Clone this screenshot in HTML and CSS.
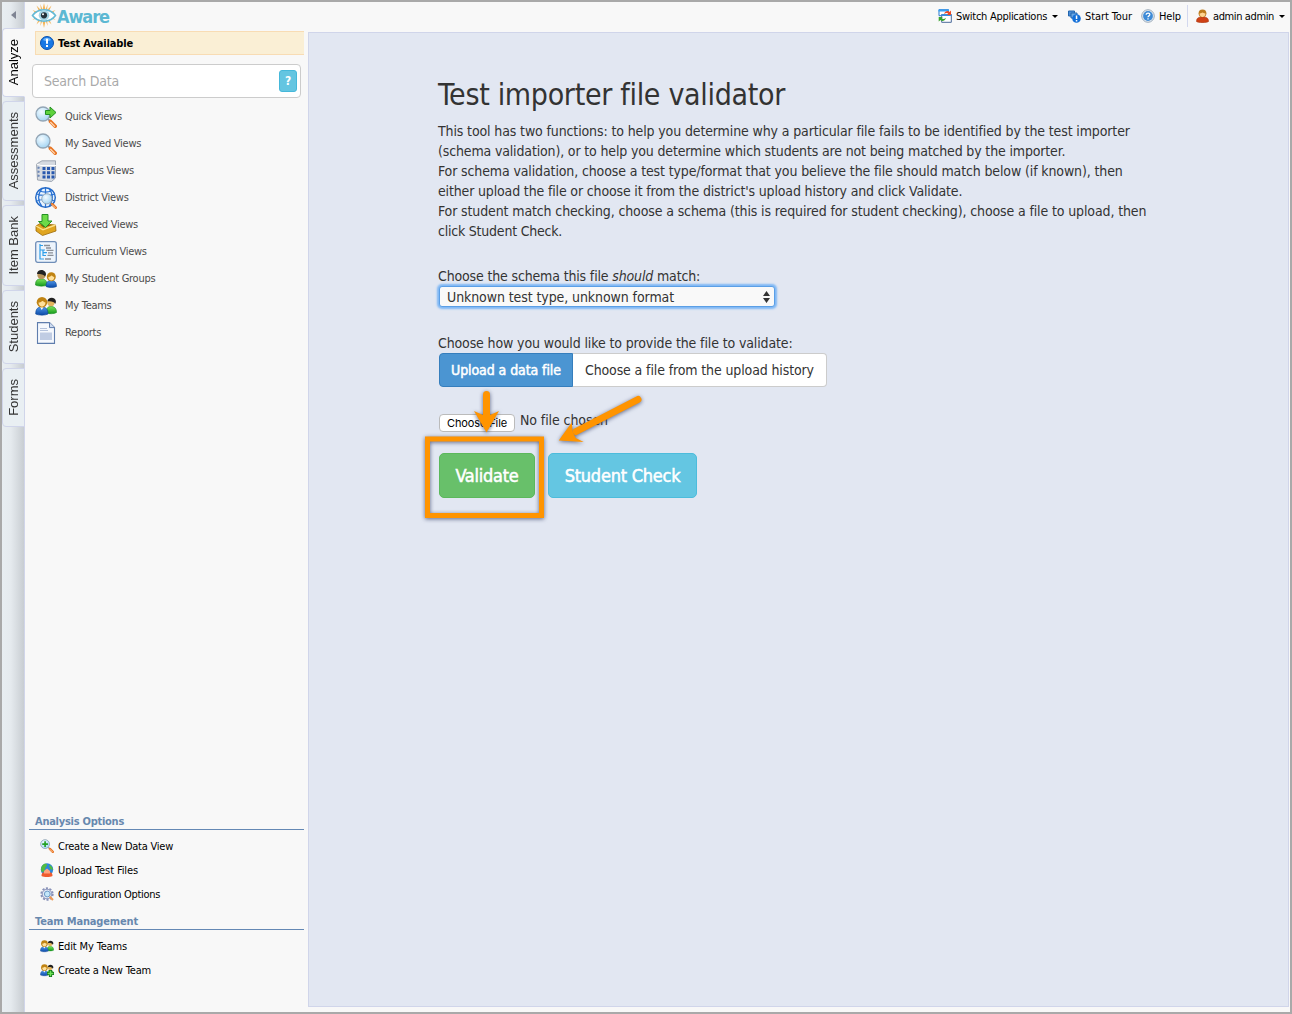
FILE: index.html
```html
<!DOCTYPE html>
<html lang="en">
<head>
<meta charset="utf-8">
<title>Aware</title>
<link rel="stylesheet" href="styles.css">
</head>
<body>
<svg class="defs" width="0" height="0" aria-hidden="true">
  <defs>
    <linearGradient id="blue" x1="0" y1="0" x2="0" y2="1"><stop offset="0" stop-color="#4f97e8"/><stop offset="1" stop-color="#0b4aa8"/></linearGradient>
    <linearGradient id="green" x1="0" y1="0" x2="0" y2="1"><stop offset="0" stop-color="#7be45a"/><stop offset="1" stop-color="#159a1c"/></linearGradient>
    <radialGradient id="lens" cx=".4" cy=".35" r=".7"><stop offset="0" stop-color="#f4fbff"/><stop offset="1" stop-color="#9fd2f2"/></radialGradient>
    <symbol id="magnifier" viewBox="0 0 22 22">
      <path d="M13 13l2.500 2.500" stroke="#8b97a3" stroke-width="2"/>
      <path d="M15.500 15.500l4.700 4.700" stroke="#e87524" stroke-width="3.600" stroke-linecap="round"/>
      <path d="M15.300 16l4.600 4.600" stroke="#ffd9b5" stroke-width="1.300"/>
      <circle cx="8" cy="8" r="7" fill="url(#lens)" stroke="#93a5b5" stroke-width="1.300"/>
    </symbol>
    <symbol id="team" viewBox="0 0 22 22">
      <path d="M11 18c0-5 2-6.500 5-6.500s5.500 1.500 5.500 6c-2 1.500-8 1.500-10.500.5z" fill="url(#green)" stroke="#168a1c" stroke-width=".6"/>
      <circle cx="16" cy="7.500" r="3.700" fill="#e2b45c"/>
      <path d="M12.500 6.500c0-5 8.500-5 8.500.5l-.8 2c-.7-2-4-3-7.700-2.500z" fill="#222"/>
      <path d="M.7 19c0-5.500 2.300-7 6-7s6.300 1.500 6.300 7c-2.500 1.500-9.500 1.500-12.300 0z" fill="url(#blue)" stroke="#0c4596" stroke-width=".6"/>
      <path d="M5 12l1.800 3L8.600 12z" fill="#fff"/>
      <circle cx="7" cy="7.200" r="5.300" fill="#c08312"/>
      <path d="M3.500 7.500c3 0 3-1.500 4-1.500s1.500 1.500 3 1.500c0 5.500-7 5.500-7 0z" fill="#ffe09b"/>
    </symbol>
  </defs>
</svg>
<div class="app">
  <nav class="rail">
    <div class="collapse"><svg width="5" height="8" viewBox="0 0 5 8"><path d="M5 0v8L0 4z" fill="#7f8493"/></svg></div>
    <a class="tab tab-analyze active"><span>Analyze</span></a>
    <a class="tab tab-assessments"><span>Assessments</span></a>
    <a class="tab tab-items"><span>Item Bank</span></a>
    <a class="tab tab-students"><span>Students</span></a>
    <a class="tab tab-forms"><span>Forms</span></a>
  </nav>
  <div class="body">
    <header class="topbar">
      <div class="logo">
        <svg width="26" height="25" viewBox="0 0 26 25">
          <path d="M13 0l1.300 6h-2.600zM13 25l1.300-6h-2.600zM5.500 2.500l4.600 4.700-2 1.300zM20.500 2.500l-4.600 4.700 2 1.300zM5.500 21.500l4.600-4.700-2-1.300zM20.500 21.500l-4.600-4.700 2-1.300zM1.500 7l5 2-1.200 1.500zM24.500 7l-5 2 1.200 1.500zM1.500 17l5-2-1.200-1.500zM24.500 17l-5-2 1.200-1.500zM9.300 1l2 5-1.400.5zM16.700 1l-2 5 1.400.5zM9.300 23l2-5-1.400-.5zM16.700 23l-2-5 1.400-.5z" fill="#f3b457"/>
          <path d="M1.500 12.500C7 5 19 5 24.500 12.500 19 20 7 20 1.500 12.500z" fill="#fff" stroke="#65b9d4" stroke-width="1.600"/>
          <circle cx="13" cy="12.300" r="5.300" fill="#a5d6e6"/><circle cx="13" cy="12.300" r="3.100" fill="#26323a"/><circle cx="12" cy="11.200" r="1" fill="#fff"/>
        </svg>
        <span>Aware</span>
      </div>
      <div class="tools">
        <a class="tool tool-apps"><svg width="14" height="14" viewBox="0 0 14 14"><path d="M1 .700h9.500v6H1z" fill="#fff" stroke="#2878cf"/><path d="M.5.500h10.500v2H.5z" fill="#39a3f4"/><path d="M3.700 5.500h9.600v7.800H3.700z" fill="#fff" stroke="#4a6a9a"/><path d="M3.500 5h10v2h-10z" fill="#3d8fdd"/><path d="M6 5c1-3 4-4 5.500-2L13 1.500V6H9l1.300-1.300C9 3.700 8 4 6 5z" fill="#ec4b25"/><path d="M8 9c-1 3-4 4-5.500 2L.700 12.500V8h4L3.500 9.300C5 10.300 6 10 8 9z" fill="#38a42d"/></svg><span>Switch Applications</span><i class="caret"></i></a>
        <a class="tool tool-tour"><svg width="13" height="13" viewBox="0 0 13 13"><path d="M.5 1h6v5h-6z" fill="#4a8ed8" stroke="#2466ae"/><path d="M3 3h6v5H3z" fill="#6ba8e4" stroke="#2466ae"/><circle cx="8.500" cy="8.500" r="4.300" fill="#1470d8"/><path d="M7.800 5.500h1.500v3.500H7.800zM7.800 10h1.500v1.400H7.800z" fill="#fff"/></svg><span>Start Tour</span></a>
        <a class="tool tool-help"><svg width="14" height="14" viewBox="0 0 14 14"><circle cx="7" cy="7" r="6.300" fill="#e3ebf3" stroke="#9dabb9"/><circle cx="7" cy="7" r="4.900" fill="#3d8ad6"/><path d="M5.200 5.700C5.200 3.500 9 3.600 8.800 5.700 8.700 6.900 7 6.900 7 8.200M7 9.300v1.200" fill="none" stroke="#fff" stroke-width="1.300"/></svg><span>Help</span></a>
        <a class="tool tool-user"><svg width="13" height="14" viewBox="0 0 13 14"><path d="M.5 12.500C.5 9 2.500 8 6.500 8s6 1 6 4.500c-2 1.500-10 1.500-12 0z" fill="#cf4115" stroke="#a83108" stroke-width=".6"/><circle cx="6.500" cy="4.300" r="3.900" fill="#bd7b1c"/><path d="M3.500 4.500c2 0 2-1 3-1s1 1 3 1c0 4.500-6 4.500-6 0z" fill="#ffd591"/></svg><span>admin admin</span><i class="caret"></i></a>
      </div>
    </header>
    <div class="columns">
      <aside class="sidebar">
        <div class="notice"><svg width="14" height="14" viewBox="0 0 14 14"><circle cx="7" cy="7" r="6.500" fill="#1878e4" stroke="#0b52b0"/><path d="M3 4c1.500-3 6.500-3 8 0-2 1.500-6 1.500-8 0z" fill="#6fb6fa"/><path d="M6 2.800h2v5H6zM6 9h2v2H6z" fill="#fff"/></svg><span>Test Available</span></div>
        <div class="search"><span>Search Data</span><b class="hint">?</b></div>
        <ul class="views">
          <li><svg width="22" height="22" viewBox="0 0 22 22"><use href="#magnifier"/><path d="M10.500 4.500h4.500V1l6 5.500-6 5.500V8.500h-4.500z" fill="#5fd23d" stroke="#239022"/></svg><span>Quick Views</span></li>
          <li><svg width="22" height="22"><use href="#magnifier"/></svg><span>My Saved Views</span></li>
          <li><svg width="22" height="22" viewBox="0 0 22 22"><path d="M1.500 4L7 .800h13.500L20.500 18l-4 3.500-14-1.500z" fill="#d5dae1" stroke="#8c96a3" stroke-width=".8"/><path d="M1.500 4L6 5.500h15" fill="none" stroke="#fff"/><path d="M7.500 7h3v3h-3zM12 7h3v3h-3zM16.500 7h3v3h-3zM7.500 11.300h3v3h-3zM12 11.300h3v3h-3zM16.500 11.300h3v3h-3zM7.500 15.600h3v3h-3zM12 15.600h3v3h-3zM16.500 15.600h3v3h-3z" fill="#2858ae"/><path d="M2.500 7.500l2 .5M2.500 11.500l2 .5M2.500 15.500l2 .5" stroke="#6c87b6" stroke-width="2"/></svg><span>Campus Views</span></li>
          <li><svg width="22" height="22" viewBox="0 0 22 22"><circle cx="10.500" cy="10.500" r="9.800" fill="#e9f4ff" stroke="#2066c4" stroke-width="1.400"/><path d="M1.500 7C7 9 15 9 20 7M1.500 14c5-2 14-2 18.500 0M10.500 1v19M7 1.500C2.500 7 2.500 14 7 19.500M14 1.500c4.500 5.500 4.500 12.500 0 18M4 3.500c4 2 9 2 13 0" fill="none" stroke="#2b74d4" stroke-width="1.200"/><svg x="6" y="6" width="16" height="16"><use href="#magnifier"/></svg></svg><span>District Views</span></li>
          <li><svg width="22" height="22" viewBox="0 0 22 22"><path d="M1 12l4-2.500 15.500 1.500.5 6-13.500 4.500L1 17z" fill="#e0a51f" stroke="#9c6a0a" stroke-width=".8"/><path d="M1 12l7 3.800L20.500 11" fill="none" stroke="#fbe08a" stroke-width="1.400"/><path d="M5 10.500l3.500 3L17 11z" fill="#81530b"/><path d="M7 .500h6v6.500h4L10.500 13.500 3.500 7.500H7z" fill="#6cdb48" stroke="#249025"/></svg><span>Received Views</span></li>
          <li><svg width="22" height="22" viewBox="0 0 22 22"><rect x=".7" y=".7" width="20.600" height="20.600" rx="2" fill="#edf4fc" stroke="#6f8eb8" stroke-width="1.300"/><path d="M5 3v15h4M5 4.500h3M5 9h5M8 9v5.500h3M8 11.700h4" fill="none" stroke="#2f9ee8" stroke-width="1.200"/><path d="M9 4.500h6M11 7h5M11.500 9.300h7M13 11.800h5M12.500 14.300h6M10 18h6" stroke="#8a8f96" stroke-width="1.300"/></svg><span>Curriculum Views</span></li>
          <li><svg width="22" height="22" viewBox="0 0 22 22"><path d="M.5 17c0-5 2-6 5.500-6s6 1 6 6c-2 1.500-9 1.500-11.500 0z" fill="url(#green)" stroke="#168a1c" stroke-width=".6"/><circle cx="6.500" cy="7" r="4.200" fill="#b9955a"/><path d="M2 6c0-5.500 9-5.500 9 .500l-1 2c-1-2-4-2.500-8-2.500z" fill="#222"/><path d="M11 18.500c0-4.500 2-6 5.200-6s5.300 1.500 5.300 6c-2.500 1.300-8 1.300-10.500 0z" fill="url(#blue)" stroke="#0c4596" stroke-width=".6"/><circle cx="16.300" cy="8.800" r="4.500" fill="#c08312"/><path d="M13.300 9c2.500 0 2.500-1.500 3.300-1.500s1 1.500 2.700 1.500c0 4.800-6 4.800-6 0z" fill="#ffe09b"/></svg><span>My Student Groups</span></li>
          <li><svg width="22" height="22"><use href="#team"/></svg><span>My Teams</span></li>
          <li><svg width="22" height="22" viewBox="0 0 22 22"><path d="M2.500.600h12l5 5v15.800h-17z" fill="#f5f8fd" stroke="#5f7dad" stroke-width="1.100"/><path d="M14.500.600v5h5" fill="#cfdcf0" stroke="#5f7dad"/><path d="M5 8.500h8M5 6.500h7" stroke="#b4c2dc"/><path d="M5 10.500h12v7.500H5z" fill="#c0cce3"/></svg><span>Reports</span></li>
        </ul>
        <section class="options">
          <h2>Analysis Options</h2>
          <ul>
            <li class="opt-view"><svg width="14" height="14" viewBox="0 0 22 22"><use href="#magnifier"/><path d="M8 3.500v9M3.500 8h9" stroke="#22a022" stroke-width="2.600"/></svg><span>Create a New Data View</span></li>
            <li class="opt-upload"><svg width="14" height="14" viewBox="0 0 14 14"><circle cx="7" cy="6.500" r="6.200" fill="#2e86d8"/><path d="M2 3c2-3 5-2.500 5-1s-2 2-2 4-1 3-3 3c-1.500-2-1-4.500 0-6zM9 2c2 0 4 3 4 5l-3-1z" fill="#51bc3f"/><path d="M1.500 13c0-3 1-3.500 3-4L7 6l2.500 3c2 .5 3 1 3 4-2.500 1.300-8.500 1.300-11 0z" fill="#ef5b2e"/><path d="M4 8L7 5.500 10 8v2.500H4z" fill="#ffa27c"/></svg><span>Upload Test Files</span></li>
            <li class="opt-config"><svg width="14" height="14" viewBox="0 0 14 14"><circle cx="7" cy="7" r="5.700" fill="none" stroke="#8891b8" stroke-width="1.900" stroke-dasharray="2.100 1.480"/><circle cx="7" cy="7" r="4.800" fill="#e1e6f4" stroke="#8d96bc"/><circle cx="7.300" cy="7" r="2.900" fill="#c3e6fa" stroke="#6e9ac6"/><path d="M9.700 9.700l3.300 3.300" stroke="#f09a55" stroke-width="2"/></svg><span>Configuration Options</span></li>
          </ul>
          <h2 class="management">Team Management</h2>
          <ul>
            <li class="opt-edit"><svg width="14" height="14"><use href="#team"/></svg><span>Edit My Teams</span></li>
            <li class="opt-new"><svg width="14" height="14" viewBox="0 0 22 22"><use href="#team"/><path d="M16.500 11v11M11 16.500h11" stroke="#11731a" stroke-width="5"/><path d="M16.500 12v9M12 16.500h9" stroke="#6fe257" stroke-width="2.400"/></svg><span>Create a New Team</span></li>
          </ul>
        </section>
      </aside>
      <main class="panel">
        <h1>Test importer file validator</h1>
        <div class="intro">
          <p class="tight-1">This tool has two functions: to help you determine why a particular file fails to be identified by the test importer</p>
          <p class="tight-2">(schema validation), or to help you determine which students are not being matched by the importer.</p>
          <p class="tight-1">For schema validation, choose a test type/format that you believe the file should match below (if known), then</p>
          <p class="tight-2">either upload the file or choose it from the district's upload history and click Validate.</p>
          <p class="tight-1">For student match checking, choose a schema (this is required for student checking), choose a file to upload, then</p>
          <p class="tight-3">click Student Check.</p>
        </div>
        <div class="label tight-2">Choose the schema this file <em>should</em> match:</div>
        <div class="select"><span>Unknown test type, unknown format</span><svg width="7" height="12" viewBox="0 0 7 12"><path d="M3.500 0L7 5H0zM3.500 12L0 7h7z" fill="#333"/></svg></div>
        <div class="label second tight-1">Choose how you would like to provide the file to validate:</div>
        <div class="switch"><a class="on">Upload a data file</a><a class="tight-1">Choose a file from the upload history</a></div>
        <div class="file"><button class="choose">Choose File</button><span>No file chosen</span></div>
        <div class="actions"><button class="btn validate">Validate</button><button class="btn check">Student Check</button></div>
      </main>
    </div>
  </div>
  <svg class="callouts" width="240" height="150" viewBox="0 0 240 150">
    <rect x="12.500" y="54" width="114" height="76.500" fill="none" stroke="#ff9400" stroke-width="5"/>
    <path d="M71.500 9.500v22" stroke="#ff9400" stroke-width="7" stroke-linecap="round"/>
    <path d="M59 26l9 4h7l9-4-12.500 21.500z" fill="#ff9400"/>
    <path d="M223 14.500l-62 32" stroke="#ff9400" stroke-width="7" stroke-linecap="round"/>
    <path d="M143.700 55.500l13-18 1 9.500 3 6 8 4z" fill="#ff9400"/>
  </svg>
</div>
</body>
</html>
```
FILE: styles.css
```css
* { box-sizing: border-box; }
body { margin: 0; font-family: "DejaVu Sans Condensed", "DejaVu Sans", sans-serif; font-stretch: condensed; font-size: 11px; color: #000; }
ul { list-style: none; margin: 0; padding: 0; }
svg { display: block; flex: none; }
span, p, a { white-space: nowrap; }
.defs { position: absolute; }
.app { position: relative; display: flex; width: 1292px; height: 1014px; border: 2px solid #a9a9a9; background: #f8f8f8; overflow: hidden; }
.tight-1 { letter-spacing: -.126px; }
.tight-2 { letter-spacing: -.152px; }
.tight-3 { letter-spacing: -.22px; }

.rail { width: 23px; flex: none; display: flex; flex-direction: column; gap: 4px; border-right: 1px solid #d0d5ea; background: linear-gradient(90deg, #e8eef2, #e5eaee 40%, #c8cdd2); }
.collapse { height: 22px; display: flex; align-items: center; padding: 4px 0 0 9px; }
.tab { width: 23px; display: flex; align-items: center; justify-content: center; border: 1px solid #d0d5ea; border-radius: 4px 0 0 4px; background: #e9eff3; color: #333; font-family: "Liberation Sans", Arial, sans-serif; font-size: 13px; }
.tab span { writing-mode: vertical-rl; transform: rotate(180deg); line-height: 15px; }
.tab.active { background: #f8f8f8; border-right-color: #f8f8f8; color: #000; }
.tab-analyze { height: 69px; }
.tab-assessments { height: 100px; }
.tab-items { height: 81px; }
.tab-students { height: 74px; }
.tab-forms { height: 59px; }

.body { flex: 1; min-width: 0; display: flex; flex-direction: column; }
.topbar { height: 30px; display: flex; justify-content: space-between; }
.logo { display: flex; padding: 1px 0 0 6px; color: #5cb8d3; font-weight: bold; font-size: 18px; line-height: 28px; letter-spacing: -1.08px; }
.tools { display: flex; align-items: center; height: 28px; }
.tool { display: flex; align-items: center; height: 22px; }
.tool svg { margin-right: 4px; }
.caret { width: 0; height: 0; margin-left: 5px; border: 3px solid transparent; border-top-color: #000; border-bottom: 0; }
.tool-apps { margin-right: 10px; letter-spacing: -.28px; }
.tool-tour { margin-right: 9px; letter-spacing: -.09px; }
.tool-help { margin-right: 6px; letter-spacing: -.145px; }
.tool-user { border-left: 1px solid #d3d8ee; padding: 0 5px 0 8px; letter-spacing: -.38px; }

.columns { flex: 1; display: flex; min-height: 0; }
.sidebar { width: 283px; flex: none; display: flex; flex-direction: column; padding: 0 4px 30px; }
.notice { display: flex; align-items: center; gap: 4px; height: 24px; margin: -1px 0 0 6px; padding-left: 4px; background: #faefd5; border: 1px solid #f8dcb4; border-right: 0; font-weight: bold; letter-spacing: -.15px; }
.search { display: flex; align-items: center; justify-content: space-between; height: 34px; margin: 9px 3px 5px; padding: 0 3px 0 11px; background: #fff; border: 1px solid #ccc; border-radius: 4px; font-size: 14px; color: #aaa; letter-spacing: -.21px; }
.hint { width: 18px; height: 22px; border: 1px solid #46b8da; border-radius: 3px; background: #64c5e1; color: #fff; font-size: 12px; line-height: 20px; text-align: center; }
.views { color: #4c4c4c; padding-left: 6px; letter-spacing: -.27px; }
.views li { display: flex; gap: 8px; height: 27px; padding-top: 3px; line-height: 22px; }
.options { margin-top: auto; }
.options h2 { margin: 0; height: 17px; padding-left: 6px; border-bottom: 1px solid #6488b4; color: #6888ae; font-size: 11px; line-height: 18px; letter-spacing: -.26px; }
.options .management { letter-spacing: -.15px; }
.options ul { padding: 4px 0 0 11px; height: 83px; }
.options ul:last-child { height: 52px; }
.options li { display: flex; align-items: center; gap: 4px; height: 24px; }
.opt-view { letter-spacing: -.235px; }
.opt-upload { letter-spacing: -.11px; }
.opt-config { letter-spacing: -.307px; }
.opt-edit { letter-spacing: -.15px; }
.opt-new { letter-spacing: -.17px; }

.panel { flex: 1; margin: 0 1px 5px 0; padding: 45px 0 0 129px; border: 1px solid #d0d5ea; background: #e2e7f2; color: #333; font-size: 14px; line-height: 20px; }
h1 { margin: 0 0 10px; font-size: 30px; line-height: 33px; font-weight: normal; letter-spacing: -.308px; }
.intro { margin: 0 0 25px; }
.intro p { margin: 0; }
.select { display: flex; align-items: center; justify-content: space-between; width: 336px; height: 21px; margin: 0 0 0 1px; padding: 0 4px 0 7px; border: 1px solid #5b9fe6; border-radius: 3px; background: #f9f9f9; box-shadow: 0 0 2px 2px #7fb8f5; letter-spacing: -.09px; }
.label.second { margin-top: 26px; }
.switch { display: flex; width: 388px; height: 34px; margin-left: 1px; line-height: 32px; }
.switch a { flex: 1; border: 1px solid #ccc; border-left: 0; border-radius: 0 4px 4px 0; background: #fff; padding: 0 12px; }
.switch a.on { flex: none; width: 134px; padding: 0 11px; border: 1px solid #357ebd; border-radius: 4px 0 0 4px; background: #4b95d2; color: #fff; letter-spacing: -.08px; -webkit-text-stroke: .5px #fff; }
.file { display: flex; gap: 5px; margin: 23px 0 0 1px; letter-spacing: -.09px; }
.choose { width: 76px; height: 18px; margin-top: 4px; padding: 0; border: 1px solid #bbb; border-radius: 4px; background: #fff; font: 11px/15px Inter, sans-serif; letter-spacing: -.11px; color: #000; }
.actions { display: flex; gap: 13px; margin: 21px 0 0 1px; }
.btn { height: 45px; padding: 0; border-radius: 5px; color: #fff; font: inherit; font-size: 18px; letter-spacing: -.24px; -webkit-text-stroke: .5px #fff; }
.validate { width: 96px; border: 1px solid #5cb85c; background: #68c06a; }
.check { width: 149px; border: 1px solid #4cbcdc; background: #64c6e2; }
.callouts { position: absolute; left: 413px; top: 383px; filter: drop-shadow(0 1px 2px rgba(50, 60, 100, .75)); }
```
